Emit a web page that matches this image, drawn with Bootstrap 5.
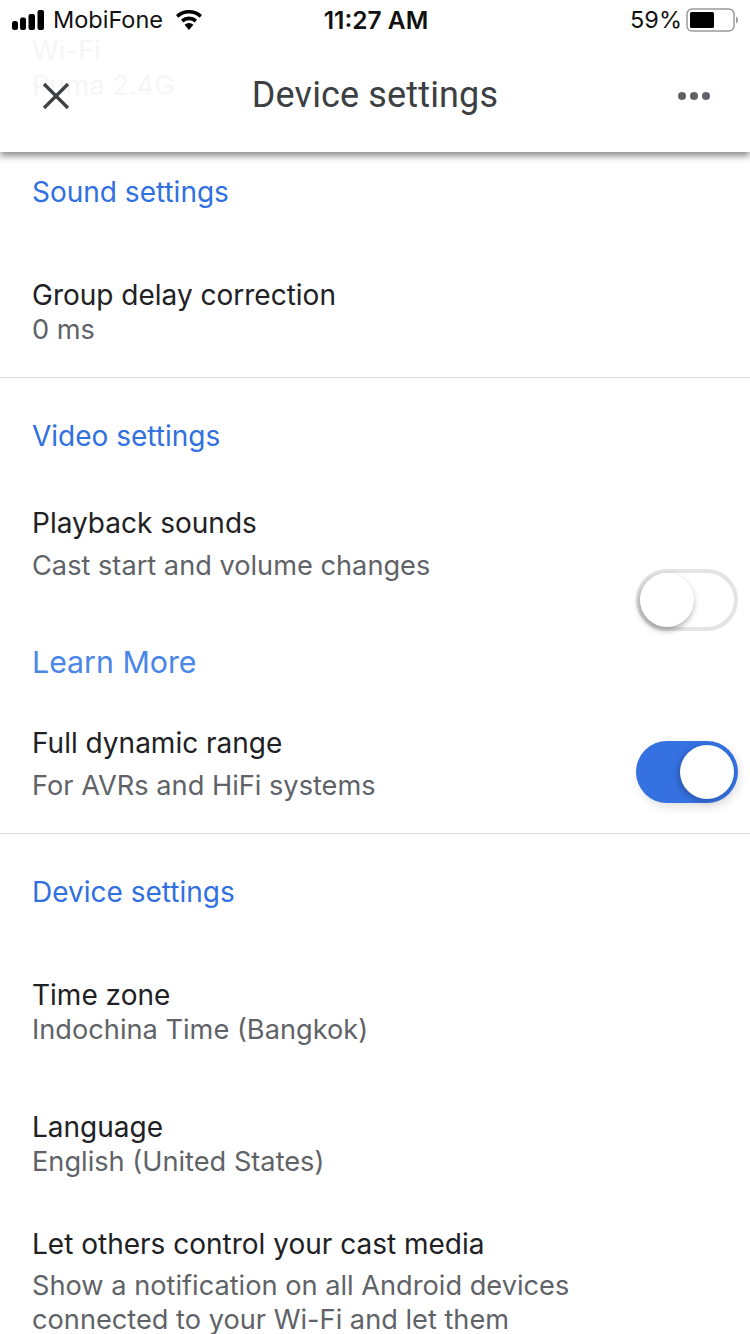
<!DOCTYPE html>
<html lang="en">
<head>
    <meta charset="UTF-8">
    <meta name="viewport" content="width=device-width, initial-scale=1.0">
    <title>Device settings</title>
    <link href="https://cdn.jsdelivr.net/npm/bootstrap@5.3.0/dist/css/bootstrap.min.css" rel="stylesheet">
    <style>
        html, body {
            height: 1334px;
            overflow: hidden;
        }
        body {
            background: #fff;
            font-family: Inter, Roboto, sans-serif;
            font-size: 27.2px;
            line-height: 34px;
        }
        .app-top {
            position: relative;
            z-index: 2;
            height: 152px;
            background: #fff;
            box-shadow: 0 4px 7px rgba(0, 0, 0, 0.45);
        }
        .ghost-text {
            position: absolute;
            left: 32px;
            color: #f6f6f6;
        }
        .ghost-wifi { top: 34px; }
        .ghost-net { top: 69px; }
        .status-row {
            position: relative;
            height: 40px;
            padding: 0 12px;
            font-family: Inter, sans-serif;
            font-size: 23.5px;
            color: #111;
        }
        .status-clock {
            position: absolute;
            left: 2px;
            right: 0;
            top: 3px;
            text-align: center;
            font-size: 24.5px;
            font-weight: 600;
            line-height: 34px;
        }
        .wifi-icon { margin-left: 11px; }
        .title-row {
            position: relative;
            height: 112px;
            padding: 0 39px 0 41px;
        }
        .page-title {
            position: absolute;
            left: 0;
            right: 0;
            top: 32px;
            margin: 0;
            text-align: center;
            font-family: Roboto, sans-serif;
            font-size: 36px;
            font-weight: 400;
            line-height: 46px;
            letter-spacing: 0.15px;
            color: #3c4043;
        }
        .sect-head {
            color: #3070e0;
            font-size: 28px;
        }
        .item-name {
            color: #202124;
            font-size: 28px;
        }
        .item-sub {
            margin-top: 1px;
            color: #5f6368;
        }
        .more-link {
            color: #4a86e8;
            font-size: 30.3px;
            text-decoration: none;
        }
        .rule-line { border-top: 1px solid #dadce0; }
        .side-pad { padding: 0 32px; }
        .sw-track {
            position: relative;
            flex: none;
            width: 102px;
            height: 62px;
            border-radius: 31px;
            margin-right: 12px;
        }
        .sw-off {
            border: 4px solid #e4e4e4;
            background: #fff;
        }
        .sw-on {
            background: #3571e1;
            box-shadow: 2px 4px 10px rgba(0, 0, 0, 0.12);
        }
        .sw-knob {
            position: absolute;
            width: 54px;
            height: 54px;
            border-radius: 50%;
            background: #fff;
        }
        .sw-off .sw-knob {
            left: 0;
            top: 0;
            box-shadow: -1px 3px 6px rgba(0, 0, 0, 0.35);
        }
        .sw-on .sw-knob {
            left: 44px;
            top: 4px;
            box-shadow: -2px 2px 6px rgba(0, 0, 0, 0.25);
        }
        .pad-first { padding-top: 23px; }
        .gap-a { margin-top: 69px; }
        .gap-b { margin-top: 30px; }
        .gap-c { margin-top: 41px; }
        .gap-d { margin-top: 53px; }
        .gap-e { margin-top: 9px; }
        .gap-f { margin-top: 62px; }
        .gap-g { margin-top: 63px; }
        .gap-h { margin-top: 47px; }
        .gap-i { margin-top: 15px; }
        .gap-j { margin-top: 30px; }
        .gap-k { margin-top: 69px; }
        .gap-l { margin-top: 63px; }
        .gap-m { margin-top: 48px; }
        .gap-n { margin-top: 8px; }
    </style>
</head>
<body>
    <div class="app-top">
        <div class="ghost-text ghost-wifi">Wi-Fi</div>
        <div class="ghost-text ghost-net">Puma 2.4G</div>

        <div class="status-row d-flex align-items-center">
            <div class="status-clock">11:27 AM</div>
            <svg width="33" height="22" viewBox="0 0 33 22">
                <rect x="0" y="12" width="6" height="9" rx="2.5" fill="#000"/>
                <rect x="8" y="8.5" width="6" height="12.5" rx="2" fill="#000"/>
                <rect x="16.5" y="5" width="6.5" height="16" rx="2" fill="#000"/>
                <rect x="25.5" y="1" width="6.5" height="20" rx="2" fill="#000"/>
            </svg>
            <span class="ms-2 position-relative">MobiFone</span>
            <svg class="wifi-icon me-auto" width="30" height="22" viewBox="0 0 30 22">
                <path d="M15 21 10.6 15.8a6.6 6.6 0 0 1 8.8 0Z" fill="#000"/>
                <path d="M15 7.5a12 12 0 0 1 8 3.1l-2.3 2.8a8.4 8.4 0 0 0-11.4 0L7 10.6a12 12 0 0 1 8-3.1Z" fill="#000"/>
                <path d="M15 1a19 19 0 0 1 13 5.1l-2.3 2.7a15.2 15.2 0 0 0-21.4 0L2 6.1A19 19 0 0 1 15 1Z" fill="#000"/>
            </svg>
            <span class="position-relative">59%</span>
            <svg class="ms-1" width="52" height="24" viewBox="0 0 52 24">
                <rect x="1" y="1" width="47" height="22" rx="5" fill="none" stroke="#9a9a9a" stroke-width="1.5"/>
                <rect x="4" y="4" width="24" height="16" rx="1.5" fill="#000"/>
                <path d="M50 8.5a4 4 0 0 1 0 7Z" fill="#9a9a9a"/>
            </svg>
        </div>

        <div class="title-row d-flex align-items-center justify-content-between">
            <svg class="position-relative" width="30" height="30" viewBox="0 0 30 30">
                <path d="M3 3 27 27M27 3 3 27" stroke="#3c4043" stroke-width="3.2" fill="none"/>
            </svg>
            <h1 class="page-title">Device settings</h1>
            <svg class="position-relative" width="34" height="10" viewBox="0 0 34 10">
                <circle cx="5" cy="5" r="4" fill="#5f6368"/>
                <circle cx="17" cy="5" r="4" fill="#5f6368"/>
                <circle cx="29" cy="5" r="4" fill="#5f6368"/>
            </svg>
        </div>
    </div>

    <main>
        <section class="side-pad">
            <div class="sect-head pad-first">Sound settings</div>
            <div class="item-name gap-a">Group delay correction</div>
            <div class="item-sub">0 ms</div>
        </section>
        <div class="rule-line gap-b"></div>

        <section>
            <div class="sect-head side-pad gap-c">Video settings</div>
            <div class="d-flex justify-content-between gap-d">
                <div class="side-pad">
                    <div class="item-name">Playback sounds</div>
                    <div class="item-sub gap-e">Cast start and volume changes</div>
                    <a class="more-link d-block gap-f" href="#">Learn More</a>
                </div>
                <div class="sw-track sw-off gap-g"><div class="sw-knob"></div></div>
            </div>
            <div class="d-flex justify-content-between gap-h">
                <div class="side-pad">
                    <div class="item-name">Full dynamic range</div>
                    <div class="item-sub gap-e">For AVRs and HiFi systems</div>
                </div>
                <div class="sw-track sw-on gap-i"><div class="sw-knob"></div></div>
            </div>
        </section>
        <div class="rule-line gap-j"></div>

        <section class="side-pad">
            <div class="sect-head gap-c">Device settings</div>
            <div class="item-name gap-k">Time zone</div>
            <div class="item-sub">Indochina Time (Bangkok)</div>
            <div class="item-name gap-l">Language</div>
            <div class="item-sub">English (United States)</div>
            <div class="item-name gap-m">Let others control your cast media</div>
            <div class="item-sub gap-n">Show a notification on all Android devices<br>connected to your Wi-Fi and let them</div>
        </section>
    </main>
</body>
</html>
